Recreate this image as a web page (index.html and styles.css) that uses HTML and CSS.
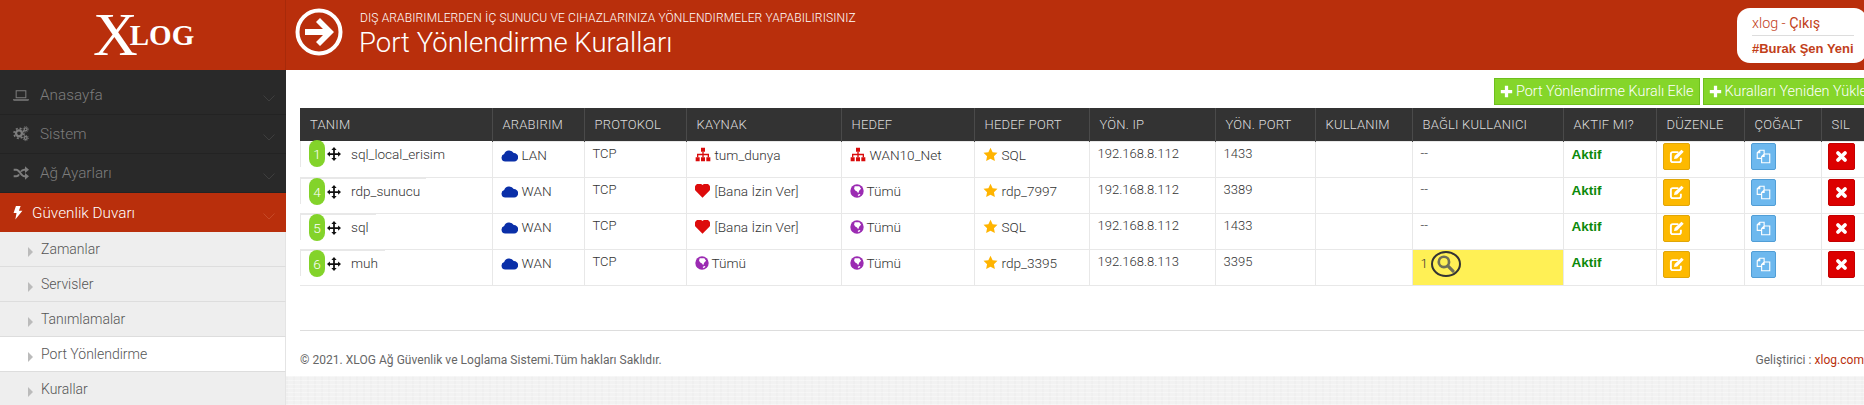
FILE: index.html
```html
<!DOCTYPE html>
<html lang="tr">
<head>
  <meta charset="UTF-8" />
  <title>XLOG - Port Yönlendirme Kuralları</title>
  <link rel="stylesheet" href="styles.css">
</head>
<body>
  <svg class="sprite" xmlns="http://www.w3.org/2000/svg">
    <symbol id="i-laptop" viewBox="0 0 24 16"><path fill-rule="evenodd" d="M4 0h16v12H4zM5.500 1.500v9h13v-9z"/><path d="M0 13.500h24v1L23 16H1L0 14.500z"/></symbol>
    <symbol id="i-cogs" viewBox="0 0 24 24"><circle cx="9" cy="11" r="4.500" fill="none" stroke="currentColor" stroke-width="3.500"/><circle cx="9" cy="11" r="7.500" fill="none" stroke="currentColor" stroke-width="2.400" stroke-dasharray="3 2.900"/><circle cx="19" cy="5" r="2.200" fill="none" stroke="currentColor" stroke-width="2"/><circle cx="19" cy="5" r="4" fill="none" stroke="currentColor" stroke-width="1.500" stroke-dasharray="1.500 1.600"/><circle cx="19" cy="18" r="2.200" fill="none" stroke="currentColor" stroke-width="2"/><circle cx="19" cy="18" r="4" fill="none" stroke="currentColor" stroke-width="1.500" stroke-dasharray="1.500 1.600"/></symbol>
    <symbol id="i-random" viewBox="0 0 24 24"><path fill="none" stroke="currentColor" stroke-width="3" d="M1 7h4c5 0 7 10 12 10h3M1 17h4c2 0 3-1 4-3M12 10c1-2 3-3 5-3h3"/><path d="M18 2l6 5-6 5zM18 12l6 5-6 5z"/></symbol>
    <symbol id="i-bolt" viewBox="4 0 17 24"><path d="M9 1h8l-3 8h6L8 24l2-11H5z"/></symbol>
    <symbol id="i-chevron" viewBox="0 0 24 24"><path fill="none" stroke="currentColor" stroke-width="1.600" d="M1 7l11 11L23 7"/></symbol>
    <symbol id="i-cloud" viewBox="0 0 24 18"><path d="M6 17.500a5.500 5.500 0 0 1-1.500-10.700A7.500 7.500 0 0 1 18 5.500a6 6 0 0 1 .5 12z"/></symbol>
    <symbol id="i-sitemap" viewBox="0 0 24 22"><path d="M9 1h6v6H9zM1 15h6v6H1zM9 15h6v6H9zM17 15h6v6h-6z"/><path d="M11 7h2v3h8v5h-2v-3h-6v3h-2v-3H5v3H3v-5h8z"/></symbol>
    <symbol id="i-heart" viewBox="1.500 2 21 20"><path d="M12 21.500 2.500 12A6.300 6.300 0 0 1 12 3.500 6.300 6.300 0 0 1 21.500 12z"/></symbol>
    <symbol id="i-globe" viewBox="0 0 24 24"><circle cx="12" cy="12" r="11.500"/><path fill="#fff" d="M8 4h8l3 4-3 3-2 5-2-3-3-2-2-3zM13 19l3-2 2 1-3 3z"/></symbol>
    <symbol id="i-star" viewBox="0 0 24 24"><path d="M12 1l3.400 7.200 7.800 1-5.700 5.400 1.500 7.900-7-3.800-7 3.800 1.500-7.900L.8 9.200l7.800-1z"/></symbol>
    <symbol id="i-move" viewBox="0 0 24 24"><path d="M12 0l4.500 5H13.500v5.500H19V7.500L24 12l-5 4.500v-3h-5.500V19h3L12 24l-4.500-5h3v-5.500H5v3L0 12l5-4.500v3h5.500V5h-3z"/></symbol>
    <symbol id="i-edit" viewBox="0 0 24 24"><path fill="none" stroke="currentColor" stroke-width="3" d="M15 5H6a3 3 0 0 0-3 3v10a3 3 0 0 0 3 3h10a3 3 0 0 0 3-3v-4"/><path d="M20 1l3.500 3.500L13 15l-5 1 1-5z"/></symbol>
    <symbol id="i-copy" viewBox="0 0 24 24"><path fill="none" stroke="currentColor" stroke-width="1.800" d="M9 15H2V6l4-4h7v6M13 8h9v14H9V12zM13 8v4H9M6 2v4H2"/></symbol>
    <symbol id="i-times" viewBox="0 0 24 24"><path fill="none" stroke="currentColor" stroke-width="7" stroke-linecap="round" d="M5.500 5.500l13 13M18.500 5.500l-13 13"/></symbol>
    <symbol id="i-plus" viewBox="0 0 24 24"><path d="M9 1.500h6V9h7.500v6H15v7.500H9V15H1.500V9H9z"/></symbol>
    <symbol id="i-arrow" viewBox="0 0 48 48"><circle cx="24" cy="24" r="21.500" fill="none" stroke="currentColor" stroke-width="4"/><path d="M25 10l14 14-14 14-4-4 7-7H10v-6h18l-7-7z"/></symbol>
    <symbol id="i-search" viewBox="0 0 24 24"><circle cx="10" cy="10" r="6.500" fill="none" stroke="currentColor" stroke-width="3.400"/><path fill="none" stroke="currentColor" stroke-width="4" stroke-linecap="round" d="M15 15l6.500 6.500"/></symbol>
  </svg>

  <header class="topbar">
    <a class="logo"><span class="logo-x">X</span><span class="logo-log">LOG</span></a>
    <svg class="page-icon"><use href="#i-arrow"/></svg>
    <div class="page-title">
      <div class="page-sub">DIŞ ARABIRIMLERDEN İÇ SUNUCU VE CIHAZLARINIZA YÖNLENDIRMELER YAPABILIRISINIZ</div>
      <h1>Port Yönlendirme Kuralları</h1>
    </div>
    <div class="userbox">
      <div class="userbox-top">xlog - <span class="logout">Çıkış</span></div>
      <div class="userbox-name">#Burak Şen Yeni</div>
    </div>
  </header>

  <div class="layout">
    <nav class="sidebar">
      <a class="nav-item"><svg class="nav-icon laptop"><use href="#i-laptop"/></svg>Anasayfa<svg class="nav-chev"><use href="#i-chevron"/></svg></a>
      <a class="nav-item"><svg class="nav-icon"><use href="#i-cogs"/></svg>Sistem<svg class="nav-chev"><use href="#i-chevron"/></svg></a>
      <a class="nav-item"><svg class="nav-icon"><use href="#i-random"/></svg>Ağ Ayarları<svg class="nav-chev"><use href="#i-chevron"/></svg></a>
      <a class="nav-item active"><svg class="nav-icon bolt"><use href="#i-bolt"/></svg>Güvenlik Duvarı<svg class="nav-chev"><use href="#i-chevron"/></svg></a>
      <a class="sub-item">Zamanlar</a>
      <a class="sub-item">Servisler</a>
      <a class="sub-item">Tanımlamalar</a>
      <a class="sub-item current">Port Yönlendirme</a>
      <a class="sub-item">Kurallar</a>
    </nav>

    <main class="main">
      <div class="main-inner">
        <div class="toolbar">
          <a class="btn-add"><svg class="btn-plus"><use href="#i-plus"/></svg>Port Yönlendirme Kuralı Ekle</a>
          <a class="btn-add"><svg class="btn-plus"><use href="#i-plus"/></svg>Kuralları Yeniden Yükle</a>
        </div>

        <table class="rules">
          <thead>
            <tr>
              <th>TANIM</th><th>ARABIRIM</th><th>PROTOKOL</th><th>KAYNAK</th><th>HEDEF</th><th>HEDEF PORT</th><th>YÖN. IP</th><th>YÖN. PORT</th><th>KULLANIM</th><th>BAĞLI KULLANICI</th><th>AKTIF MI?</th><th>DÜZENLE</th><th>ÇOĞALT</th><th>SIL</th>
            </tr>
          </thead>
          <tbody>
            <tr>
              <td class="name-cell"><div class="name-box wide1"><span class="badge">1</span><svg class="ico move"><use href="#i-move"/></svg><span class="name">sql_local_erisim</span></div></td>
              <td><svg class="ico cloud"><use href="#i-cloud"/></svg>LAN</td>
              <td class="plain">TCP</td>
              <td><svg class="ico net"><use href="#i-sitemap"/></svg>tum_dunya</td>
              <td><svg class="ico net"><use href="#i-sitemap"/></svg>WAN10_Net</td>
              <td><svg class="ico star"><use href="#i-star"/></svg>SQL</td>
              <td class="plain">192.168.8.112</td>
              <td class="plain">1433</td>
              <td></td>
              <td class="plain">--</td>
              <td class="status">Aktif</td>
              <td class="act"><a class="act-btn edit"><svg><use href="#i-edit"/></svg></a></td>
              <td class="act"><a class="act-btn copy"><svg><use href="#i-copy"/></svg></a></td>
              <td class="act"><a class="act-btn del"><svg><use href="#i-times"/></svg></a></td>
            </tr>
            <tr>
              <td class="name-cell"><div class="name-box wide2"><span class="badge">4</span><svg class="ico move"><use href="#i-move"/></svg><span class="name">rdp_sunucu</span></div></td>
              <td><svg class="ico cloud"><use href="#i-cloud"/></svg>WAN</td>
              <td class="plain">TCP</td>
              <td><svg class="ico heart"><use href="#i-heart"/></svg>[Bana İzin Ver]</td>
              <td><svg class="ico globe"><use href="#i-globe"/></svg>Tümü</td>
              <td><svg class="ico star"><use href="#i-star"/></svg>rdp_7997</td>
              <td class="plain">192.168.8.112</td>
              <td class="plain">3389</td>
              <td></td>
              <td class="plain">--</td>
              <td class="status">Aktif</td>
              <td class="act"><a class="act-btn edit"><svg><use href="#i-edit"/></svg></a></td>
              <td class="act"><a class="act-btn copy"><svg><use href="#i-copy"/></svg></a></td>
              <td class="act"><a class="act-btn del"><svg><use href="#i-times"/></svg></a></td>
            </tr>
            <tr>
              <td class="name-cell"><div class="name-box wide3"><span class="badge">5</span><svg class="ico move"><use href="#i-move"/></svg><span class="name">sql</span></div></td>
              <td><svg class="ico cloud"><use href="#i-cloud"/></svg>WAN</td>
              <td class="plain">TCP</td>
              <td><svg class="ico heart"><use href="#i-heart"/></svg>[Bana İzin Ver]</td>
              <td><svg class="ico globe"><use href="#i-globe"/></svg>Tümü</td>
              <td><svg class="ico star"><use href="#i-star"/></svg>SQL</td>
              <td class="plain">192.168.8.112</td>
              <td class="plain">1433</td>
              <td></td>
              <td class="plain">--</td>
              <td class="status">Aktif</td>
              <td class="act"><a class="act-btn edit"><svg><use href="#i-edit"/></svg></a></td>
              <td class="act"><a class="act-btn copy"><svg><use href="#i-copy"/></svg></a></td>
              <td class="act"><a class="act-btn del"><svg><use href="#i-times"/></svg></a></td>
            </tr>
            <tr>
              <td class="name-cell"><div class="name-box wide4"><span class="badge">6</span><svg class="ico move"><use href="#i-move"/></svg><span class="name">muh</span></div></td>
              <td><svg class="ico cloud"><use href="#i-cloud"/></svg>WAN</td>
              <td class="plain">TCP</td>
              <td><svg class="ico globe"><use href="#i-globe"/></svg>Tümü</td>
              <td><svg class="ico globe"><use href="#i-globe"/></svg>Tümü</td>
              <td><svg class="ico star"><use href="#i-star"/></svg>rdp_3395</td>
              <td class="plain">192.168.8.113</td>
              <td class="plain">3395</td>
              <td></td>
              <td class="plain connected">1<span class="lens"><svg><use href="#i-search"/></svg></span></td>
              <td class="status">Aktif</td>
              <td class="act"><a class="act-btn edit"><svg><use href="#i-edit"/></svg></a></td>
              <td class="act"><a class="act-btn copy"><svg><use href="#i-copy"/></svg></a></td>
              <td class="act"><a class="act-btn del"><svg><use href="#i-times"/></svg></a></td>
            </tr>
          </tbody>
        </table>

        <footer class="page-foot">
          <span>© 2021. XLOG Ağ Güvenlik ve Loglama Sistemi.Tüm hakları Saklıdır.</span>
          <span>Geliştirici : <a class="foot-link">xlog.com</a></span>
        </footer>
      </div>
    </main>
  </div>
</body>
</html>
```
FILE: styles.css
```css
html, body {
  margin: 0;
  height: 405px;
  overflow: hidden;
}
body {
  font-family: 'Roboto', sans-serif;
  font-size: 13px;
  font-weight: 300;
  color: #333;
  background: #fff;
}
.sprite {
  display: none;
}
svg {
  fill: currentColor;
}

/* top bar */
.topbar {
  display: flex;
  align-items: center;
  height: 70px;
  background: #b92f0c;
  color: #fff;
}
.logo {
  display: block;
  box-sizing: border-box;
  width: 286px;
  height: 70px;
  padding: 0 0 0 93px;
  border-right: 1px solid #a82a0a;
  font-family: 'Liberation Serif', serif;
  line-height: 68px;
  white-space: nowrap;
  color: #fff;
}
.logo-x {
  font-size: 62px;
  letter-spacing: -8px;
}
.logo-log {
  font-size: 29px;
  font-weight: 700;
  vertical-align: 10px;
}
.page-icon {
  width: 48px;
  height: 48px;
  margin: -6px 16px 0 9px;
  color: #fff;
}
.page-title {
  margin-top: -1px;
}
.page-sub {
  font-size: 12px;
  font-weight: 300;
  line-height: 14px;
  letter-spacing: .14px;
  margin-left: 1px;
}
.page-title h1 {
  margin: 2px 0 0 0;
  font-size: 27.500px;
  font-weight: 300;
  line-height: 32px;
}
.userbox {
  box-sizing: border-box;
  width: 130px;
  height: 55px;
  margin: 1px -3px 0 auto;
  padding: 4px 13px 0 15px;
  background: #fff;
  border-radius: 13px;
  color: #c2401a;
}
.userbox-top {
  height: 23px;
  font-size: 14.300px;
  line-height: 22px;
  border-bottom: 1px solid #ddd;
}
.logout {
  font-weight: 400;
}
.userbox-name {
  font-size: 13px;
  font-weight: 700;
  line-height: 25px;
  white-space: nowrap;
  font-family: 'Liberation Sans', sans-serif;
}

.layout {
  display: flex;
  height: 335px;
}

/* left menu */
.sidebar {
  flex: 0 0 286px;
  padding-top: 6px;
  background: #292929;
  box-sizing: border-box;
}
.nav-item {
  display: flex;
  align-items: center;
  box-sizing: border-box;
  height: 39px;
  padding-left: 13px;
  font-size: 15.300px;
  color: #7d7d7d;
  border-bottom: 1px solid #232323;
}
.nav-icon {
  width: 16px;
  height: 16px;
  margin-right: 11px;
}
.nav-icon.laptop {
  height: 11px;
}
.nav-icon.bolt {
  width: 10px;
  height: 17px;
  margin-right: 9px;
  color: #fff;
}
.nav-chev {
  width: 12px;
  height: 12px;
  margin: 6px 11px 0 auto;
  color: #444;
}
.nav-item.active {
  background: #b92f0c;
  color: #fff;
  border-bottom: 0;
}
.nav-item.active .nav-chev {
  color: #c9502f;
}
.sub-item {
  display: flex;
  align-items: center;
  box-sizing: border-box;
  height: 35px;
  padding-left: 41px;
  font-size: 14px;
  color: #555;
  background: #eee;
  border-bottom: 1px solid #ddd;
  border-right: 1px solid #e4e4e4;
  position: relative;
}
.sub-item::before {
  content: "";
  position: absolute;
  left: 28px;
  top: 15px;
  border-left: 5px solid #bbb;
  border-top: 5px solid transparent;
  border-bottom: 5px solid transparent;
}
.sub-item.current {
  background: #fff;
}

/* content */
.main {
  flex: 1;
  min-width: 0;
  background-color: #f2f2f2;
  background-image:
    repeating-linear-gradient(0deg, rgba(255,255,255,.35) 0 1px, transparent 1px 4px),
    repeating-linear-gradient(90deg, rgba(0,0,0,.012) 0 2px, transparent 2px 7px);
}
.main-inner {
  box-sizing: border-box;
  height: 306px;
  padding: 8px 0 0 14px;
  background: #fff;
}
.toolbar {
  display: flex;
  justify-content: flex-end;
  gap: 3px;
  width: 1573px;
  height: 27px;
}
.btn-add {
  display: flex;
  align-items: center;
  box-sizing: border-box;
  height: 27px;
  padding: 0 5px 0 5px;
  font-size: 14.400px;
  font-weight: 300;
  color: #fff;
  background: #85d62a;
  border: 1px solid #6ebf1d;
  white-space: nowrap;
}
.btn-plus {
  width: 13px;
  height: 13px;
  margin-right: 3px;
}
.rules {
  table-layout: fixed;
  border-collapse: collapse;
  width: 1570px;
  margin-top: 3px;
}
.rules th {
  height: 33px;
  box-sizing: border-box;
  padding: 0 10px;
  background: #333;
  color: #ddd;
  font-size: 13px;
  font-weight: 300;
  letter-spacing: .2px;
  text-align: left;
  border-right: 1px solid #4a4a4a;
  white-space: nowrap;
}
.rules th:nth-child(1) { width: 192px; }
.rules th:nth-child(2) { width: 92px; }
.rules th:nth-child(3) { width: 102px; }
.rules th:nth-child(4) { width: 155px; }
.rules th:nth-child(5) { width: 133px; }
.rules th:nth-child(6) { width: 115px; }
.rules th:nth-child(7) { width: 126px; }
.rules th:nth-child(8) { width: 100px; }
.rules th:nth-child(9) { width: 97px; }
.rules th:nth-child(10) { width: 151px; }
.rules th:nth-child(11) { width: 93px; }
.rules th:nth-child(12) { width: 88px; }
.rules th:nth-child(13) { width: 77px; }
.rules th:nth-child(14) { width: 49px; }
.rules td {
  height: 36px;
  box-sizing: border-box;
  padding: 4px 8px 0;
  vertical-align: top;
  font-size: 13.600px;
  line-height: 18px;
  border: 1px solid #e8e8e8;
  white-space: nowrap;
}
.rules td.plain {
  padding-top: 3px;
  font-size: 13px;
}
.rules td.name-cell {
  padding: 0;
  border-top: 0;
  border-left: 0;
}
.name-box {
  display: flex;
  align-items: flex-start;
  height: 26px;
  padding-left: 8px;
  border-top: 1px solid #e8e8e8;
  border-left: 1px solid #e8e8e8;
  box-sizing: border-box;
}
tbody tr:first-child .name-box {
  border-top: 0;
}
.wide1 { width: 150px; }
.wide2 { width: 126px; }
.wide3 { width: 76px; }
.wide4 { width: 85px; }
.badge {
  flex: none;
  width: 16px;
  height: 27px;
  margin-top: -1px;
  border-radius: 8px;
  background: #83d32a;
  color: #fff;
  text-align: center;
  line-height: 28px;
}
.name {
  margin: 3px 0 0 0;
}
tbody tr:first-child .name {
  margin-top: 4px;
}
.ico {
  width: 16px;
  height: 14px;
  margin-right: 4px;
  vertical-align: -2px;
}
.ico.move {
  flex: none;
  width: 14px;
  height: 14px;
  margin: 6px 10px 0 2px;
  color: #111;
}
.ico.cloud { color: #0a2fa8; width: 17px; height: 13px; }
.ico.net { color: #d90b0b; width: 16px; height: 15px; }
.ico.heart { color: #dd0b0b; width: 15px; height: 14px; margin-right: 5px; }
.ico.globe { color: #9b2bb2; width: 14px; height: 14px; margin-right: 3px; }
.ico.star { color: #ffb400; width: 15px; height: 15px; }
.rules td.connected {
  padding-top: 5px;
  background: #fff055;
}
.lens {
  display: inline-flex;
  align-items: center;
  justify-content: center;
  box-sizing: border-box;
  width: 30px;
  height: 26px;
  margin: -4px 0 0 3px;
  vertical-align: top;
  border: 2px solid #333;
  border-radius: 50%;
  color: #6f6f58;
}
.lens svg {
  width: 19px;
  height: 19px;
}
.rules td.status {
  padding-top: 4px;
  font-family: 'Liberation Sans', sans-serif;
  font-size: 13.500px;
  font-weight: 700;
  color: #0b8a0b;
}
.rules td.act {
  padding: 1px 0 0 6px;
}
.act-btn {
  display: flex;
  align-items: center;
  justify-content: center;
  box-sizing: border-box;
  width: 27px;
  height: 27px;
  border-radius: 2px;
  color: #fff;
}
.act-btn svg {
  width: 15px;
  height: 15px;
}
.act-btn.edit { background: #fdb900; border: 1px solid #e0a608; }
.act-btn.copy { width: 25px; background: #6db8ee; border: 1px solid #519ed6; }
.act-btn.del { background: #dc0000; border: 1px solid #c40000; }
.act-btn.del svg { width: 13px; height: 13px; }

.page-foot {
  display: flex;
  justify-content: space-between;
  align-items: center;
  box-sizing: border-box;
  height: 46px;
  margin-top: 44px;
  padding-top: 13px;
  border-top: 1px solid #ddd;
  font-size: 12px;
  font-weight: 400;
  letter-spacing: .035px;
  color: #666;
}
.foot-link {
  color: #b92f0c;
}
```
